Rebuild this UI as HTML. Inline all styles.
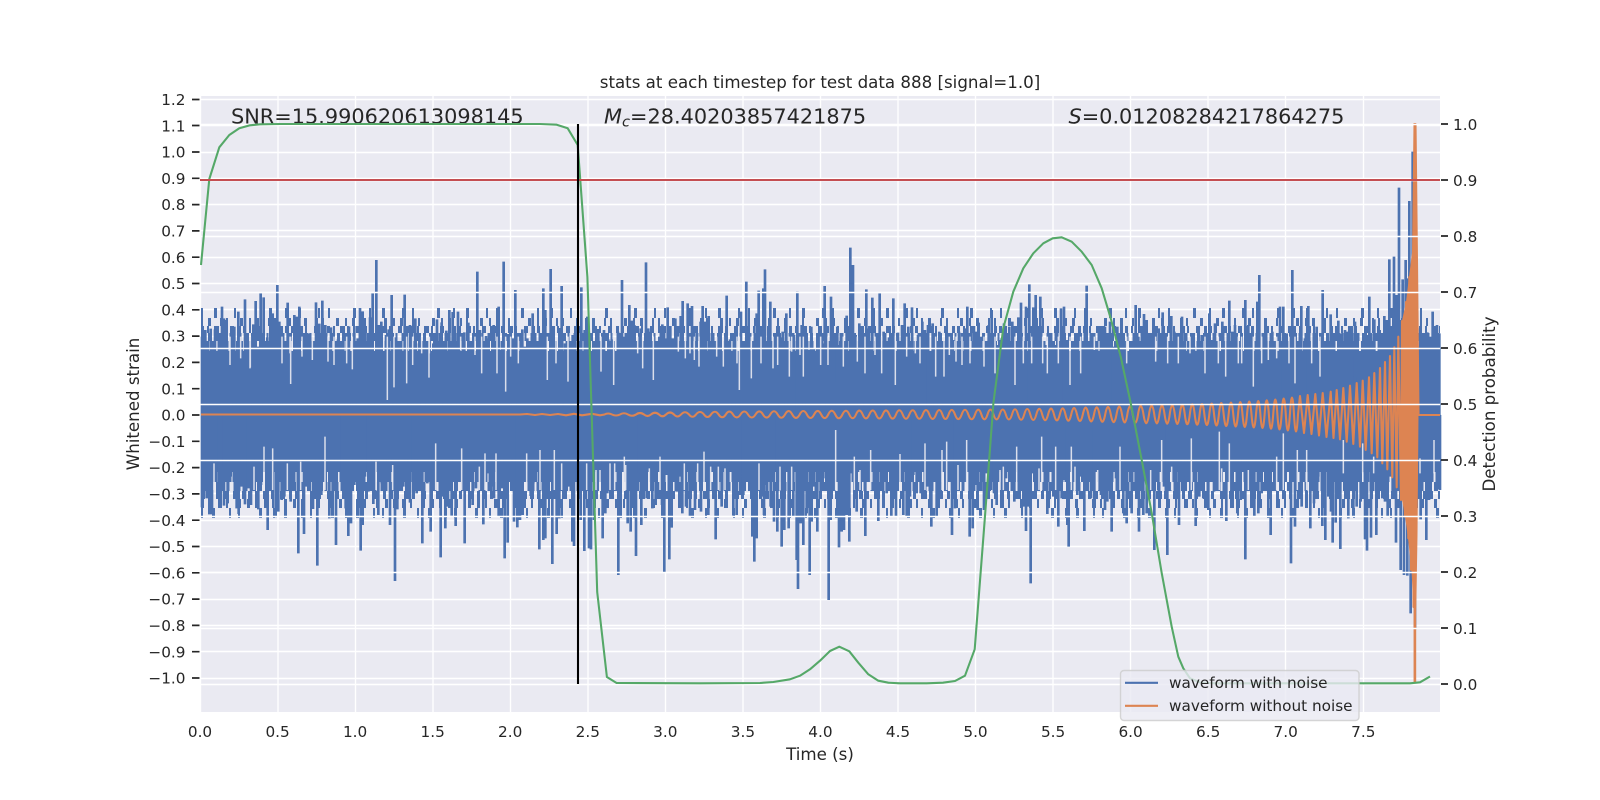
<!DOCTYPE html>
<html>
<head>
<meta charset="utf-8">
<title>stats at each timestep</title>
<style>
html,body{margin:0;padding:0;background:#fff;width:1600px;height:800px;overflow:hidden}
svg{display:block}
text{font-family:"DejaVu Sans","Liberation Sans",sans-serif;fill:#262626}
.t{font-size:15.28px}
.l{font-size:16.67px}
.a{font-size:20.83px}
</style>
</head>
<body>
<svg width="1600" height="800" viewBox="0 0 1600 800" xmlns="http://www.w3.org/2000/svg">
<rect width="1600" height="800" fill="#fff"/>
<rect x="200" y="96" width="1240" height="616" fill="#eaeaf2"/>

<!-- left axis grid -->
<g stroke="#fff" stroke-width="1.4" fill="none">
<path d="M200 99.5H1440M200 125.5H1440M200 152.5H1440M200 178.5H1440M200 204.5H1440M200 230.5H1440M200 257.5H1440M200 283.5H1440M200 309.5H1440M200 336.5H1440M200 362.5H1440M200 388.5H1440M200 415.5H1440M200 441.5H1440M200 467.5H1440M200 493.5H1440M200 520.5H1440M200 546.5H1440M200 572.5H1440M200 599.5H1440M200 625.5H1440M200 651.5H1440M200 678.5H1440"/>
<path d="M200.5 96V712M278 96V712M355.5 96V712M433 96V712M510.5 96V712M588 96V712M665.5 96V712M743 96V712M820.5 96V712M898 96V712M975.5 96V712M1053 96V712M1130.5 96V712M1208 96V712M1285.5 96V712M1363.5 96V712"/>
</g>

<!-- noise band -->
<rect x="201" y="351" width="1239" height="121" fill="#4c72b0"/>
<g fill="none" stroke="#4c72b0">
<path stroke-width="10" stroke-dasharray="8 1.5 5 2 11 1 4 2.5 7 1 13 2" d="M201 346H1440"/>
<path stroke-width="8" stroke-dasharray="5 2 3 3 8 1.5 2 4 6 2 4 2.5" d="M201 337H1440"/>
<path stroke-width="7" stroke-dasharray="3 3 2 5 5 2 2 7 4 4 3 2" d="M201 329.5H1440"/>
<path stroke-width="8" stroke-dasharray="2 5 3 9 2 4 2 12 3 6" d="M201 322H1440"/>
<path stroke-width="10" stroke-dasharray="2 11 3 17 2 8 2 23 3 13" d="M201 313H1440"/>
<path stroke-width="10" stroke-dasharray="9 1.5 6 2 12 1 5 2.5 8 1 14 2" d="M201 477H1440"/>
<path stroke-width="9" stroke-dasharray="6 2 4 3 9 1.5 3 4 7 2 5 2.5" d="M201 486.5H1440"/>
<path stroke-width="8" stroke-dasharray="4 3 3 5 6 2 3 6 5 4 3 3" d="M201 495H1440"/>
<path stroke-width="9" stroke-dasharray="3 5 2 7 4 4 2 10 3 6" d="M201 503.5H1440"/>
<path stroke-width="10" stroke-dasharray="2 9 3 14 2 7 2 19 3 11" d="M201 513H1440"/>
</g>
<g fill="none" stroke="#4c72b0" stroke-width="8">
<g transform="translate(190,230) scale(.33333)">
<path d="M36 320V555M46 300V555M62 296V555M75 298V555M96 230V555M102 265V555M110 270V555M133 290V555M145 245V555M165 208V555M173 335V555M190 283V555M197 213V555M205 350V555M212 190V555M221 202V555M232 322V555M241 262V555M248 250V555M255 270V555M262 165V555M268 275V555M283 333V555M293 218V555M313 255V555M320 260V555M328 230V555M345 358V555M358 310V555M378 217V555M388 281V555M397 212V555M406 285V555M423 292V555M444 328V555M452 340V555M460 289V555M477 289V555M493 288V555M503 325V555M510 234V555M518 244V555M525 292V555M540 262V555M548 190V555M559 90V555M566 285V555M574 275V555M588 315V555M596 298V555M605 195V555M616 322V555M644 194V555M650 290V555M660 285V555M676 265V555M687 340V555M704 328V555M730 340V555M741 268V555M745 335V555M755 277V555M769 302V555M778 240V555M788 246V555M795 345V555M804 245V555M823 307V555M835 278V555M843 350V555M862 125V555M870 300V555M888 318V555M896 325V555M911 285V555M926 230V555M934 360V555M941 95V555M955 312V555M968 325V555M976 180V555M992 315V555M997 298V555M1004 350V555M1012 325V555M1020 335V555M1028 250V555M1034 340V555M1040 345V555M1050 318V555M1060 175V555M1066 240V555M1082 117V555M1090 305V555M1108 294V555M1115 168V555M1125 340V555M1148 315V555M1156 335V555M1174 172V555M1184 300V555M1192 260V555"/>
<path d="M36 832V555M50 805V555M58 853V555M66 853V555M78 735V555M87 795V555M93 712V555M102 827V555M113 820V555M122 740V555M132 740V555M140 835V555M146 852V555M155 770V555M165 823V555M175 775V555M183 825V555M197 735V555M205 838V555M213 765V555M233 900V555M240 735V555M257 862V555M265 845V555M275 810V555M283 800V555M302 815V555M325 970V555M342 912V555M350 770V555M357 745V555M369 837V555M382 1007V555M394 795V555M418 865V555M428 835V555M438 945V555M447 725V555M457 760V555M467 835V555M475 918V555M483 880V555M493 765V555M502 765V555M512 962V555M518 885V555M525 740V555M535 785V555M550 822V555M565 855V555M575 760V555M585 770V555M600 885V555M615 1053V555M622 838V555M632 740V555M640 770V555M650 800V555M660 818V555M670 750V555M680 790V555M697 940V555M705 720V555M712 760V555M722 905V555M742 740V555M752 982V555M758 800V555M766 895V555M774 830V555M785 857V555M797 888V555M805 750V555M824 940V555M832 780V555M848 825V555M858 775V555M880 883V555M895 730V555M905 770V555M912 805V555M926 860V555M935 775V555M944 985V555M953 938V555M962 745V555M972 875V555M982 892V555M990 870V555M998 855V555M1022 798V555M1030 760V555M1048 958V555M1060 930V555M1066 925V555M1078 720V555M1087 1002V555M1100 912V555M1108 865V555M1125 760V555M1135 770V555M1147 935V555M1152 948V555M1165 795V555M1172 870V555M1183 963V555M1197 955V555"/>
</g>
<g transform="translate(590,230) scale(.33333)">
<path d="M25 297V555M42 300V555M55 328V555M65 328V555M84 305V555M96 150V555M103 320V555M110 350V555M118 225V555M125 272V555M133 285V555M152 295V555M168 97V555M175 295V555M182 305V555M208 320V555M217 283V555M225 325V555M233 232V555M241 288V555M248 325V555M256 265V555M272 258V555M278 213V555M293 220V555M306 228V555M320 288V555M332 275V555M338 228V555M345 275V555M356 258V555M362 335V555M372 345V555M392 290V555M410 197V555M420 328V555M432 322V555M453 245V555M462 350V555M469 155V555M476 345V555M500 250V555M506 182V555M520 175V555M525 118V555M533 345V555M541 215V555M571 322V555M578 305V555M589 250V555M612 315V555M622 185V555M635 285V555M650 330V555M658 360V555M664 290V555M672 355V555M697 340V555M704 168V555M723 200V555M732 345V555M742 290V555M750 345V555M770 257V555M781 53V555M789 105V555M797 315V555M808 280V555M818 295V555M829 178V555M835 295V555M847 203V555M869 190V555M881 305V555M897 322V555M910 205V555M924 308V555M930 355V555M936 285V555M944 220V555M955 290V555M966 232V555M984 315V555M997 275V555M1005 300V555M1014 285V555M1028 280V555M1048 305V555M1055 350V555M1089 330V555M1107 305V555M1124 295V555M1132 230V555M1152 288V555M1160 305V555M1166 278V555M1173 320V555M1190 350V555M1196 285V555"/>
<path d="M3 958V555M12 870V555M38 925V555M46 850V555M52 790V555M65 790V555M85 1035V555M92 860V555M113 880V555M122 905V555M130 825V555M138 978V555M147 730V555M154 885V555M160 740V555M170 805V555M187 835V555M197 825V555M216 825V555M223 1028V555M230 735V555M238 988V555M245 893V555M252 735V555M260 785V555M268 740V555M277 850V555M288 830V555M300 860V555M308 740V555M315 840V555M333 845V555M355 855V555M377 928V555M395 830V555M415 765V555M430 857V555M440 855V555M450 795V555M460 795V555M470 735V555M480 760V555M487 920V555M493 995V555M500 925V555M514 800V555M522 855V555M530 765V555M542 830V555M552 875V555M562 905V555M575 950V555M583 900V555M590 720V555M596 895V555M610 860V555M620 990V555M624 1077V555M632 880V555M640 945V555M650 850V555M659 1035V555M665 875V555M673 770V555M682 905V555M692 800V555M700 745V555M716 1110V555M722 870V555M747 952V555M755 905V555M762 900V555M770 855V555M778 935V555M785 730V555M800 845V555M826 918V555M835 750V555M852 760V555M865 873V555M875 720V555M890 790V555M904 860V555M912 790V555M918 860V555M940 855V555M950 860V555M960 800V555M970 735V555M980 790V555M992 790V555M1012 770V555M1024 890V555M1030 740V555M1040 860V555M1048 800V555M1078 725V555M1086 915V555M1095 835V555M1115 750V555M1139 920V555M1148 895V555M1155 765V555M1163 840V555M1172 765V555M1182 840V555M1190 730V555"/>
</g>
<g transform="translate(990,230) scale(.33333)">
<path d="M5 240V555M10 320V555M22 345V555M28 330V555M35 325V555M42 280V555M50 310V555M58 290V555M67 275V555M85 262V555M93 218V555M108 230V555M118 163V555M130 232V555M137 195V555M143 350V555M151 200V555M167 345V555M183 335V555M197 345V555M213 235V555M222 230V555M230 330V555M252 335V555M264 323V555M283 335V555M290 167V555M298 350V555M337 288V555M345 290V555M360 275V555M370 350V555M382 290V555M395 350V555M437 225V555M445 320V555M452 335V555M462 252V555M470 270V555M478 310V555M490 285V555M506 295V555M518 247V555M526 310V555M544 258V555M553 305V555M576 260V555M585 310V555M612 350V555M625 300V555M635 315V555M658 250V555M666 330V555M675 280V555M697 275V555M718 212V555M727 305V555M735 285V555M766 210V555M775 285V555M802 215V555M808 135V555M826 300V555M847 305V555M870 230V555M880 230V555M890 310V555M907 120V555M925 355V555M934 228V555M945 325V555M955 228V555M980 290V555M998 180V555M1005 360V555"/>
<path d="M3 780V555M12 790V555M20 825V555M48 745V555M73 815V555M88 800V555M100 830V555M108 903V555M115 830V555M122 1060V555M130 730V555M165 745V555M172 852V555M190 800V555M205 890V555M215 805V555M222 750V555M232 885V555M236 950V555M262 795V555M273 740V555M283 903V555M292 730V555M303 805V555M313 830V555M333 795V555M345 840V555M352 815V555M365 905V555M378 745V555M400 850V555M410 880V555M425 850V555M437 760V555M447 905V555M460 855V555M470 850V555M493 960V555M505 780V555M522 770V555M532 975V555M556 760V555M567 885V555M580 740V555M590 740V555M617 888V555M628 800V555M640 805V555M655 840V555M672 785V555M709 873V555M728 810V555M742 850V555M752 810V555M766 988V555M793 860V555M805 850V555M815 790V555M842 915V555M885 700V555M903 1000V555M915 890V555M935 830V555M961 895V555M972 820V555M985 740V555M997 888V555M1006 930V555M1015 800V555"/>
</g>
<g transform="translate(1330,120) scale(.33333)">
<path d="M2 583V885M10 660V885M25 602V885M33 640V885M45 630V885M50 635V885M60 632V885M66 710V885M75 605V885M85 770V885M100 652V885M113 645V885M118 530V885M124 640V885M133 598V885M142 750V885M149 630V885M155 640V885M163 588V885M170 600V885M178 418V885M185 650V885M192 410V885M200 525V885M207 203V885M213 600V885M218 478V885M227 420V885M235 475V885M238 243V885M248 95V885M262 625V885M270 680V885M278 672V885M285 655V885M292 637V885M300 650V885M308 575V885M315 660V885M321 615V885M328 640V885"/>
</g>
<g transform="translate(1330,400) scale(.33333)">
<path d="M3 335V45M8 428V45M17 368V45M24 265V45M31 447V45M47 295V45M55 355V45M62 250V45M70 350V45M80 320V45M85 240V45M92 305V45M105 418V45M111 452V45M116 200V45M123 413V45M139 405V45M148 240V45M157 295V45M165 305V45M173 350V45M181 230V45M188 285V45M198 428V45M212 510V45M222 525V45M232 527V45M242 640V45M255 688V45M264 280V45M272 358V45M280 230V45M289 420V45M297 300V45M304 215V45M322 268V45M330 270V45"/>
</g>
</g>

<!-- slits in the noise band -->
<g fill="none" stroke="#eaeaf2" stroke-width="4.5" opacity=".9">
<path transform="translate(190,230) scale(.33333)" d="M592 320V510M302 320V462M612 320V472M947 320V485M717 320V443M1072 320V450M650 320V460M180 320V415M1134 320V455M875 320V430M487 320V418M120 320V405M152 320V385M181 320V412M276 320V400M300 320V370M336 320V380M367 320V390M414 320V395M432 320V405M470 320V400M668 320V405M695 320V370M718 320V370M812 320V360M855 320V375M921 320V430M962 320V380M985 320V400M1098 320V400M405 780V620M248 780V655M222 780V650M737 780V640M815 780V655M885 780V670M918 780V670M1010 780V670M1050 780V660M1093 780V660M72 780V700M192 780V710M292 780V700M332 780V695M558 780V695M608 780V705M868 780V710M1115 780V700M1190 780V700"/>
<path transform="translate(590,230) scale(.33333)" d="M71 320V465M448 320V480M916 320V465M484 320V445M598 320V440M640 320V440M190 320V450M875 320V430M1037 320V440M1062 320V440M33 320V425M143 320V370M158 320V415M265 320V365M286 320V385M300 320V370M313 320V390M327 320V410M380 320V380M400 320V410M441 320V400M513 320V400M549 320V415M563 320V405M605 320V365M630 320V375M692 320V405M714 320V405M760 320V410M802 320V395M825 320V430M855 320V375M950 320V380M976 320V370M990 320V400M1078 320V375M1098 320V395M1116 320V405M1140 320V400M1182 320V410M737 780V600M842 780V660M1005 780V640M1056 780V660M1070 780V635M1130 780V630M342 780V665M930 780V672M18 780V720M30 780V720M60 780V700M74 780V700M107 780V705M178 780V715M283 780V700M323 780V700M362 780V710M385 780V710M405 780V715M507 780V700M570 780V710M605 780V710M810 780V720M1104 780V705M793 780V680M103 780V680M210 780V680"/>
<path transform="translate(990,230) scale(.33333)" d="M75 320V465M240 320V465M915 320V460M790 320V470M707 320V440M172 320V430M990 320V440M15 320V430M100 320V400M125 320V400M158 320V400M205 320V400M272 320V430M313 320V360M410 320V400M497 320V395M533 320V400M565 320V400M600 320V370M645 320V430M685 320V400M745 320V400M755 320V400M815 320V400M835 320V390M860 320V385M897 320V400M965 320V400M688 780V605M880 780V610M515 780V630M604 780V625M155 780V620M718 780V640M922 780V660M197 780V650M244 780V650M390 780V650M80 780V650M950 780V660M30 780V720M40 780V710M147 780V715M255 780V710M323 780V720M482 780V720M545 780V710M695 780V715M775 780V720M860 780V680"/>
<path transform="translate(1330,400) scale(.33333)" d="M40 220V120M98 220V130M131 220V170M270 220V175M312 220V120"/>
</g>

<!-- orange waveform -->
<path fill="none" stroke="#dd8452" stroke-width="2.08" stroke-linejoin="round" d="M201 414.5H520L527 414L535 415L542 414L550 415L558 414L566 415.3L574 413.8L582 415.3L592 413.8L600 415.3L604.5 414.5
Q608 412.5 612 414.5Q616 416.5 620 414.5
Q624 412 628 414.5Q632 417 636 414.5
Q640 411.5 644 414.5Q647.5 417.5 651 414.5
Q655 411 659 414.5Q662.5 418 666 414.5
Q670 410.5 674 414.5Q677.5 418.5 681 414.5
Q685 410 689 414.5Q692.5 419 696 414.5
Q700 409.5 704 414.5Q707.5 419.5 711 414.5
Q715 409 718.6 414.5Q722.2 420 725.8 414.5
Q729.3 408.7 733 414.5Q736.8 420.3 740.5 414.5
Q744.3 408.5 748 414.5Q751.8 420.5 755.5 414.5
Q759.3 408.3 763 414.5Q766.7 420.7 770.3 414.5
Q774 408 777.7 414.5Q781.3 421 785 414.5
Q788.7 407.7 792.3 414.5Q796 421.3 799.7 414.5
Q803.3 407.5 806.9 414.5Q810.5 421.5 814.1 414.5
Q817.7 407.3 821.2 414.5Q824.7 421.7 828.2 414.5
Q831.7 407 835.3 414.5Q838.8 422 842.4 414.5
Q846 407 849.3 414.5Q852.7 422 856 414.5
Q859.3 406.7 862.7 414.5Q866 422.3 869.3 414.5
Q872.7 406.5 876 414.5Q879.3 422.5 882.7 414.5
Q886 406.3 889.3 414.5Q892.7 422.7 896 414.5
Q899.3 406 902.7 414.5Q906 423 909.3 414.5
Q912.7 406 916 414.5Q919.3 423 922.7 414.5
Q926 405.7 929.3 414.5Q932.7 423.3 936 414.5
Q939.3 405.5 942.4 414.5Q945.5 423.5 948.6 414.5
Q951.7 405.3 955 414.5Q958.3 423.7 961.7 414.5
Q965 405 968.3 414.5Q971.7 424 975 414.5
Q978.3 404.9 981.4 414.5Q984.4 424.1 987.5 414.5
Q990.5 404.7 993.5 414.5Q996.6 424.3 999.6 414.5
Q1002.7 404.5 1005.8 414.5Q1008.9 424.5 1012 414.5
Q1015 404 1018 414.5Q1021.2 425 1024.2 414.5
Q1027.3 403.5 1030.3 414.5Q1033.3 425.5 1036.3 414.5
Q1039.3 403 1042.2 414.5Q1045.2 426 1048.1 414.5
Q1051 402.5 1054 414.5Q1056.9 426.5 1059.8 414.5
Q1062.7 402 1065.5 414.5Q1068.4 427 1071.2 414.5
Q1074 401.3 1077 414.5Q1079.9 427.7 1082.8 414.5
Q1085.7 400.7 1088.4 414.5Q1091.2 428.3 1094 414.5
Q1096.7 400 1099.5 414.5Q1102.4 429 1105.2 414.5
Q1108 399.3 1110.8 414.5Q1113.7 429.7 1116.5 414.5
Q1119.3 398.5 1122 414.5Q1124.7 430.5 1127.3 414.5
Q1130 398 1132.7 414.5Q1135.4 431 1138 414.5
Q1140.7 397 1143.5 414.5Q1146.2 432 1149 414.5
Q1151.7 396.7 1154.3 414.5Q1156.9 432.3 1159.4 414.5
Q1162 396 1164.6 414.5Q1167.2 433 1169.7 414.5
Q1172.3 395.5 1174.8 414.5Q1177.3 433.5 1179.8 414.5
Q1182.3 395 1184.8 414.5Q1187.3 434 1189.8 414.5
Q1192.3 394 1194.7 414.5Q1197.2 435 1199.6 414.5
Q1202 393.5 1204.4 414.5Q1206.9 435.5 1209.3 414.5
Q1211.7 392.5 1214.1 414.5Q1216.5 436.5 1218.9 414.5
Q1221.3 391.5 1223.7 414.5Q1226.2 437.5 1228.6 414.5
Q1231 390.5 1233.3 414.5Q1235.7 438.5 1238 414.5
Q1240.3 389.5 1242.5 414.5Q1244.8 439.5 1247 414.5
Q1249.3 388.5 1251.5 414.5Q1253.8 440.5 1256 414.5
Q1258.3 387.5 1260.4 414.5Q1262.5 441.5 1264.6 414.5
Q1266.7 386 1268.9 414.5Q1271 443 1273.2 414.5
Q1275.3 384.5 1277.4 414.5Q1279.5 444.5 1281.6 414.5
Q1283.7 382.5 1285.8 414.5Q1287.8 446.5 1289.9 414.5
Q1292 380.5 1294 414.5Q1296 448.5 1298 414.5
L1300 396L1304 433L1307.7 395L1311.5 434L1315.3 394L1319 435.5L1322.7 393L1326.5 437L1330.7 391.7L1333.5 438L1336.7 390L1340 439.3L1343.3 388L1346.7 441.7L1350 385.7L1353.3 444L1356.7 383L1360 446.7L1362.7 380.7L1365.7 450L1369 377.3L1371.7 453.3L1374.3 373L1377.3 457.3L1380 368L1382.3 463.3L1385 362L1387.3 469.3L1390 356L1392.3 477.3L1394.3 347.3L1396.7 487.3L1398.3 336.7L1401 500L1402 321L1405 516.7L1406 302L1408.3 538.3L1409.3 277L1411 570L1412.5 263L1413.5 607L1414.7 124L1414.7 682L1415.5 124L1417 263L1418.5 415H1440"/>
<path fill="#dd8452" d="M1402 321L1406 302L1409 277L1412 253L1413.5 123H1416L1416.3 263L1417.5 264L1418.5 415L1417.5 535L1416.2 613V682H1413.7V613L1411.5 570L1408 538L1405 516L1402 500Z"/>

<!-- right axis grid -->
<path fill="none" stroke="#fff" stroke-width="1.4" d="M200 124.5H1440M200 180.5H1440M200 236.5H1440M200 292.5H1440M200 348.5H1440M200 404.5H1440M200 460.5H1440M200 516.5H1440M200 572.5H1440M200 628.5H1440M200 684.5H1440"/>

<!-- annotations -->
<text class="a" x="231" y="123.5">SNR=15.990620613098145</text>
<text class="a" x="604" y="123.5"><tspan font-style="italic">M</tspan><tspan font-style="italic" font-size="14.6" dy="3">c</tspan><tspan dy="-3">=28.40203857421875</tspan></text>
<text class="a" x="1068.5" y="123.5"><tspan font-style="italic">S</tspan>=0.01208284217864275</text>

<!-- green probability -->
<path fill="none" stroke="#55a868" stroke-width="2.08" stroke-linejoin="round" d="M201 265L209.3 179L219.3 147.3L229.3 135L239.3 128.3L250 125.3L260 124.3L280 124H540L556.7 124.7L567.7 128.3L577.7 145L587.4 277L597.2 592L606.9 677L616.6 683L700 683.3L760 683L773.3 682L790 679.3L800 675.7L810 669.3L820 660.7L830 651L839.3 646.7L849.3 651.3L858.3 662.7L868.3 674.3L878.3 680.7L888.3 682.7L900 683.3L926.7 683.3L943 682.7L955 681L965 675.7L974.7 649.3L984.7 520L993.4 403L1003.3 328L1013.3 291.7L1023.3 268.3L1033.3 253.3L1043.3 243.3L1052.7 238.3L1061.7 237.3L1071.7 241.7L1081.7 251.7L1091.7 265L1101.7 288.3L1110.7 318.3L1120.7 356.7L1130.5 402L1141.7 460L1151.7 513L1161.7 573L1171.7 626.7L1178.3 656.7L1183.3 668.3L1190 678.3L1200 682.5L1215 683.3L1410 683.3L1420 682.3L1430 676.5"/>
<!-- threshold + marker -->
<path fill="none" stroke="#c44e52" stroke-width="2.08" d="M200 180H1440"/>
<path fill="none" stroke="#000" stroke-width="2.08" d="M578 124V684"/>

<!-- ticks -->
<g stroke="#262626" stroke-width="1.7" fill="none">
<path d="M192 99.5H199.5M192 125.5H199.5M192 152H199.5M192 178.3H199.5M192 204.6H199.5M192 230.9H199.5M192 257.2H199.5M192 283.5H199.5M192 309.8H199.5M192 336.1H199.5M192 362.4H199.5M192 388.7H199.5M192 415H199.5M192 441.3H199.5M192 467.6H199.5M192 493.9H199.5M192 520.2H199.5M192 546.5H199.5M192 572.8H199.5M192 599.1H199.5M192 625.4H199.5M192 651.7H199.5M192 678H199.5"/>
<path d="M1441 124H1448M1441 180H1448M1441 236H1448M1441 292H1448M1441 348H1448M1441 404H1448M1441 460H1448M1441 516H1448M1441 572H1448M1441 628H1448M1441 684H1448"/>
</g>

<!-- left tick labels -->
<g class="t" text-anchor="end">
<text class="t" x="185.5" y="105">1.2</text>
<text class="t" x="185.5" y="131.3">1.1</text>
<text class="t" x="185.5" y="157.6">1.0</text>
<text class="t" x="185.5" y="183.9">0.9</text>
<text class="t" x="185.5" y="210.2">0.8</text>
<text class="t" x="185.5" y="236.5">0.7</text>
<text class="t" x="185.5" y="262.8">0.6</text>
<text class="t" x="185.5" y="289.1">0.5</text>
<text class="t" x="185.5" y="315.4">0.4</text>
<text class="t" x="185.5" y="341.7">0.3</text>
<text class="t" x="185.5" y="368">0.2</text>
<text class="t" x="185.5" y="394.3">0.1</text>
<text class="t" x="185.5" y="420.6">0.0</text>
<text class="t" x="185.5" y="446.9">−0.1</text>
<text class="t" x="185.5" y="473.2">−0.2</text>
<text class="t" x="185.5" y="499.5">−0.3</text>
<text class="t" x="185.5" y="525.8">−0.4</text>
<text class="t" x="185.5" y="552.1">−0.5</text>
<text class="t" x="185.5" y="578.4">−0.6</text>
<text class="t" x="185.5" y="604.7">−0.7</text>
<text class="t" x="185.5" y="631">−0.8</text>
<text class="t" x="185.5" y="657.3">−0.9</text>
<text class="t" x="185.5" y="683.6">−1.0</text>
</g>

<!-- right tick labels -->
<g>
<text class="t" x="1453" y="130">1.0</text>
<text class="t" x="1453" y="186">0.9</text>
<text class="t" x="1453" y="242">0.8</text>
<text class="t" x="1453" y="298">0.7</text>
<text class="t" x="1453" y="354">0.6</text>
<text class="t" x="1453" y="410">0.5</text>
<text class="t" x="1453" y="466">0.4</text>
<text class="t" x="1453" y="522">0.3</text>
<text class="t" x="1453" y="578">0.2</text>
<text class="t" x="1453" y="634">0.1</text>
<text class="t" x="1453" y="690">0.0</text>
</g>

<!-- x tick labels -->
<g text-anchor="middle">
<text class="t" x="200" y="737">0.0</text>
<text class="t" x="277.6" y="737">0.5</text>
<text class="t" x="355.1" y="737">1.0</text>
<text class="t" x="432.7" y="737">1.5</text>
<text class="t" x="510.2" y="737">2.0</text>
<text class="t" x="587.8" y="737">2.5</text>
<text class="t" x="665.3" y="737">3.0</text>
<text class="t" x="742.9" y="737">3.5</text>
<text class="t" x="820.4" y="737">4.0</text>
<text class="t" x="898" y="737">4.5</text>
<text class="t" x="975.5" y="737">5.0</text>
<text class="t" x="1053.1" y="737">5.5</text>
<text class="t" x="1130.6" y="737">6.0</text>
<text class="t" x="1208.2" y="737">6.5</text>
<text class="t" x="1285.7" y="737">7.0</text>
<text class="t" x="1363.3" y="737">7.5</text>
</g>

<!-- axis labels and title -->
<text class="l" x="820" y="760" text-anchor="middle">Time (s)</text>
<text class="l" transform="translate(139,404) rotate(-90)" text-anchor="middle">Whitened strain</text>
<text class="l" transform="translate(1495,404) rotate(-90)" text-anchor="middle">Detection probability</text>
<text class="l" x="820" y="88" text-anchor="middle">stats at each timestep for test data 888 [signal=1.0]</text>

<!-- legend -->
<rect x="1120.5" y="670.5" width="238.5" height="50" rx="3.5" ry="3.5" fill="#eaeaf2" fill-opacity=".8" stroke="#ccc" stroke-opacity=".8" stroke-width="1.4"/>
<path fill="none" stroke="#4c72b0" stroke-width="2.08" d="M1125 682.8H1158"/>
<path fill="none" stroke="#dd8452" stroke-width="2.08" d="M1125 705.8H1158"/>
<text class="t" x="1169" y="688">waveform with noise</text>
<text class="t" x="1169" y="711">waveform without noise</text>
</svg>
</body>
</html>
